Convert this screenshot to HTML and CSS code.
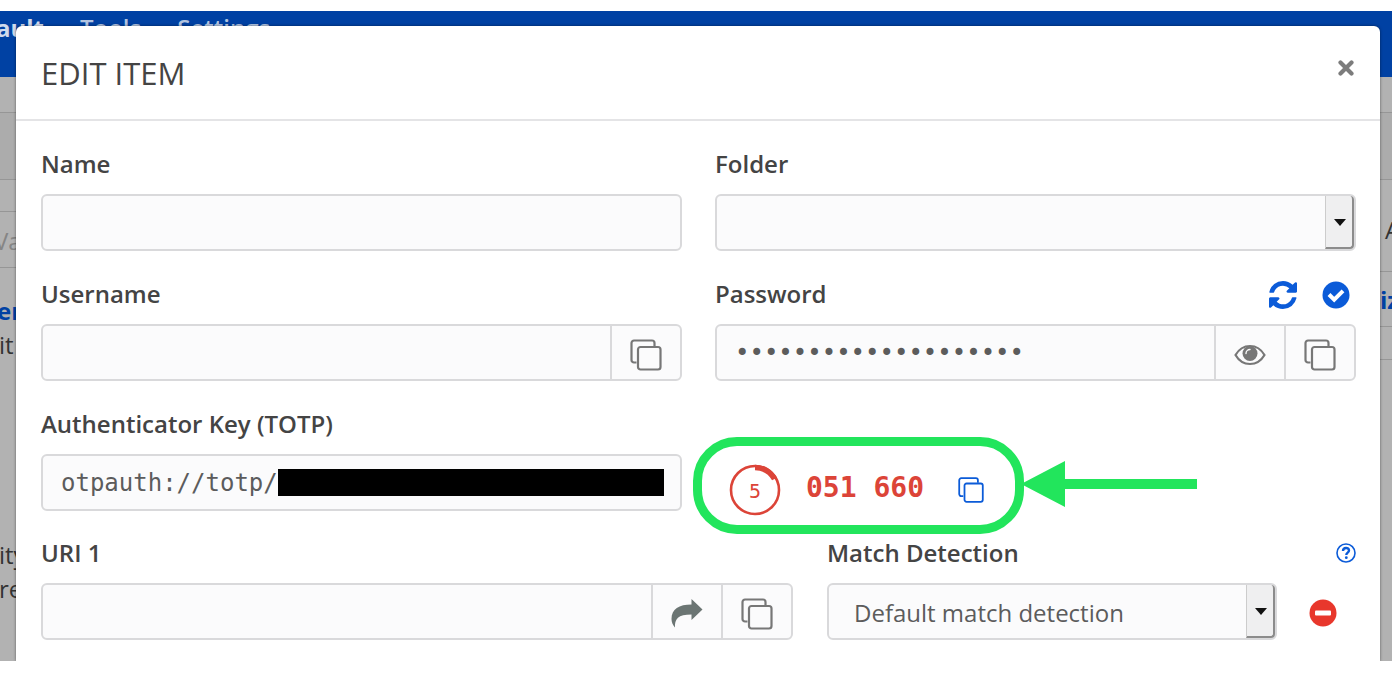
FILE: index.html
```html
<!DOCTYPE html>
<html lang="en">
<head>
<meta charset="utf-8">
<title>Edit item</title>
<link rel="stylesheet" href="styles.css">
</head>
<body>
<svg class="symbols" aria-hidden="true">
  <symbol id="copy" viewBox="0 0 32 32">
    <path d="M6.500 23.500H4a2.500 2.500 0 0 1-2.500-2.500V4A2.500 2.500 0 0 1 4 1.500h18A2.500 2.500 0 0 1 24.500 4v3" fill="none" stroke="currentColor" stroke-width="2.200"/>
    <rect x="8" y="8" width="22.500" height="22.500" rx="2.500" fill="none" stroke="currentColor" stroke-width="2.200"/>
  </symbol>
</svg>
<div class="stage">
  <div class="page" aria-hidden="true">
    <div class="nav"><span class="active">ault</span><span>Tools</span><span>Settings</span></div>
    <div class="strip"></div>
    <div class="band"></div>
    <div class="columns">
      <div class="side">
        <div class="search">Va</div>
        <div class="side-link">er</div>
        <div class="side-text">it</div>
        <div class="side-text later">ity</div>
        <div class="side-text">re</div>
      </div>
      <div class="side right">
        <div class="cell">A</div>
        <div class="cell link">iz</div>
        <div class="cell short"></div>
      </div>
    </div>
  </div>

  <form class="modal" role="dialog" aria-labelledby="title">
    <header class="modal-header">
      <h1 id="title">EDIT ITEM</h1>
      <button type="button" class="icon-button close" aria-label="Close">
        <svg viewBox="0 0 16 16" width="16" height="16"><path d="M2.500 2.500l11 11M13.500 2.500l-11 11" stroke="currentColor" stroke-width="4.200" stroke-linecap="round"/></svg>
      </button>
    </header>
    <div class="modal-body">
      <div class="row">
        <div class="field">
          <div class="label-row"><label for="name">Name</label></div>
          <div class="control"><input id="name" type="text"></div>
        </div>
        <div class="field">
          <div class="label-row"><label for="folder">Folder</label></div>
          <div class="control select"><select id="folder"><option></option></select></div>
        </div>
      </div>

      <div class="row">
        <div class="field">
          <div class="label-row"><label for="username">Username</label></div>
          <div class="control">
            <input id="username" type="text">
            <button type="button" class="addon" aria-label="Copy username"><svg class="copy"><use href="#copy"/></svg></button>
          </div>
        </div>
        <div class="field">
          <div class="label-row">
            <label for="password">Password</label>
            <div class="actions">
              <button type="button" class="icon-button" aria-label="Generate password">
                <svg viewBox="0 0 1536 1536" width="28" height="28"><path fill="currentColor" d="M1511 928q0 5-1 7-64 268-268 434.500t-478 166.500q-146 0-282.500-55t-243.500-157l-129 129q-19 19-45 19t-45-19-19-45v-448q0-26 19-45t45-19h448q26 0 45 19t19 45-19 45l-137 137q71 66 161 102t187 36q134 0 250-65t186-179q11-17 53-117 8-23 30-23h192q13 0 22.500 9.500t9.500 22.500zm25-800v448q0 26-19 45t-45 19h-448q-26 0-45-19t-19-45 19-45l138-138q-148-137-349-137-134 0-250 65t-186 179q-11 17-53 117-8 23-30 23h-199q-13 0-22.500-9.500t-9.500-22.500v-7q65-268 270-434.500t480-166.500q146 0 284 55.500t245 156.500l130-129q19-19 45-19t45 19 19 45z"/></svg>
              </button>
              <button type="button" class="icon-button" aria-label="Check password">
                <svg viewBox="0 0 28 28" width="28" height="28"><circle cx="14" cy="14" r="13.500" fill="currentColor"/><path d="M7 13.500l5.200 5.200 8.800-8.800" fill="none" stroke="#fff" stroke-width="4"/></svg>
              </button>
            </div>
          </div>
          <div class="control">
            <input id="password" class="mono" type="password" value="abcdefghijklmnopqrst">
            <button type="button" class="addon" aria-label="Show password">
              <svg viewBox="0 0 32 22" width="32" height="22"><path d="M1.500 11C5 5 10 2 16 2s11 3 14.500 9C27 17 22 20 16 20S5 17 1.500 11z" fill="none" stroke="currentColor" stroke-width="2.200"/><circle cx="16" cy="9.500" r="7.500" fill="currentColor"/><path d="M12 9.500a4 4 0 0 1 4-4" fill="none" stroke="#fafafa" stroke-width="1.400" stroke-linecap="round"/></svg>
            </button>
            <button type="button" class="addon" aria-label="Copy password"><svg class="copy"><use href="#copy"/></svg></button>
          </div>
        </div>
      </div>

      <div class="row">
        <div class="field">
          <div class="label-row"><label for="totp">Authenticator Key (TOTP)</label></div>
          <div class="control redacted"><input id="totp" class="mono" type="text" value="otpauth://totp/"></div>
        </div>
        <div class="totp">
          <svg class="timer" viewBox="0 0 52 52" width="52" height="52" role="img" aria-label="5 seconds left">
            <circle cx="26" cy="26" r="24" fill="none" stroke="currentColor" stroke-width="2.600"/>
            <path d="M26 3.500A22.500 22.500 0 0 1 45.500 15" fill="none" stroke="currentColor" stroke-width="5.500"/>
            <text x="26" y="34" text-anchor="middle" fill="currentColor">5</text>
          </svg>
          <output class="code">051 660</output>
          <button type="button" class="icon-button" aria-label="Copy code"><svg class="copy small"><use href="#copy"/></svg></button>
          <div class="highlight"></div>
          <svg class="arrow" viewBox="0 0 176 48" width="176" height="48" aria-hidden="true"><path d="M0 24L44 1v18h132v10H44v18z" fill="currentColor"/></svg>
        </div>
      </div>

      <div class="row uri">
        <div class="field">
          <div class="label-row"><label for="uri">URI 1</label></div>
          <div class="control">
            <input id="uri" type="text">
            <button type="button" class="addon launch" aria-label="Launch">
              <svg viewBox="0 0 32 30" width="32" height="30"><path d="M20.500 1v5.500C8 6.500 .5 11 .5 21c0 3 1.200 6 3.500 8.500C3.500 21 7 16.500 20.500 16.500V22L31.500 11.500z" fill="currentColor"/></svg>
            </button>
            <button type="button" class="addon" aria-label="Copy URI"><svg class="copy"><use href="#copy"/></svg></button>
          </div>
        </div>
        <div class="field">
          <div class="label-row">
            <label for="match">Match Detection</label>
            <a class="help" href="#match" aria-label="Help">
              <svg viewBox="0 0 20 20" width="20" height="20"><circle cx="10" cy="10" r="9" fill="none" stroke="currentColor" stroke-width="1.600"/><path d="M7 8c0-4 6-4 6-.5 0 2.200-2.700 2-2.700 4.500" fill="none" stroke="currentColor" stroke-width="2.400"/><circle cx="10.300" cy="14.700" r="1.400" fill="currentColor"/></svg>
            </a>
          </div>
          <div class="match">
            <div class="control select"><select id="match"><option>Default match detection</option></select></div>
            <button type="button" class="icon-button remove" aria-label="Remove URI">
              <svg viewBox="0 0 28 28" width="28" height="28"><circle cx="14" cy="14" r="13.500" fill="currentColor"/><rect x="6" y="11.500" width="16" height="5" rx="1" fill="#fff"/></svg>
            </button>
          </div>
        </div>
      </div>
    </div>
  </form>
</div>
</body>
</html>
```
FILE: styles.css
```css
*,
*::before,
*::after {
  box-sizing: border-box;
}

body {
  margin: 0;
  padding: 11px 8px 18px 0;
  background: #fff;
  color: #444;
  font-family: "Open Sans", sans-serif;
  font-size: 24px;
  line-height: 34px;
}

.symbols {
  position: absolute;
  width: 0;
  height: 0;
}

svg {
  display: block;
}

.stage {
  position: relative;
  overflow: hidden;
  padding: 15px 12px 0 16px;
}

/* Dimmed page behind the dialog */
.page {
  position: absolute;
  inset: 0;
  background: #b2b2b2;
  color: #333;
}

.nav {
  display: flex;
  gap: 36px;
  height: 66px;
  background: #0041a3;
  color: #b2c4e0;
  font-size: 24px;
  font-weight: 600;
}

.active {
  color: #d0daec;
  font-weight: 700;
  text-indent: -4px;
}

.strip {
  height: 35px;
}

.band {
  height: 68px;
  background: #acacac;
  border: solid #969696;
  border-width: 1px 0;
}

.columns {
  display: flex;
  justify-content: space-between;
}

.side {
  width: 16px;
  padding-top: 31px;
  white-space: nowrap;
}

.search {
  height: 57px;
  margin-bottom: 26px;
  border: solid #969696;
  border-width: 1px 0;
  line-height: 57px;
  text-indent: -6px;
  color: #858585;
}

.side-link {
  color: #0041a3;
  font-weight: 700;
  text-indent: -3px;
}

.side-text {
  text-indent: -1px;
}

.later {
  padding-top: 176px;
}

.side.right {
  width: 12px;
  padding: 0;
}

.cell {
  height: 92px;
  border-bottom: 1px solid #969696;
  line-height: 100px;
  text-indent: 5px;
}

.cell.link {
  height: 55px;
  line-height: 56px;
  color: #0041a3;
  font-weight: 700;
  text-indent: 0;
}

.cell.short {
  height: 33px;
}

/* Dialog */
.modal {
  position: relative;
  background: #fff;
  border-radius: 6px 6px 0 0;
  box-shadow: 0 0 3px rgba(0, 0, 0, 0.5);
}

.modal-header {
  display: flex;
  justify-content: space-between;
  align-items: flex-start;
  height: 95px;
  padding: 24px 26px 0 25px;
  border-bottom: 2px solid #e4e4e6;
}

h1 {
  margin: 0;
  font-size: 31px;
  font-weight: 400;
  line-height: 46px;
}

.icon-button {
  padding: 0;
  border: 0;
  background: none;
  color: #0b5bd8;
}

.close {
  padding-top: 10px;
  color: #7c7c7c;
}

.modal-body {
  display: flex;
  flex-direction: column;
  gap: 26px;
  padding: 26px 24px 21px 25px;
}

.row {
  display: grid;
  grid-template-columns: 1fr 1fr;
  gap: 33px;
}

.uri {
  grid-template-columns: 752fr 529fr;
  gap: 34px;
  margin-top: -6px;
}

.field {
  min-width: 0;
}

.label-row {
  display: flex;
  justify-content: space-between;
  align-items: center;
  margin-bottom: 13px;
}

label {
  font-weight: 600;
}

.actions {
  display: flex;
  gap: 25px;
  padding: 2px 6px 0 0;
}

.control {
  position: relative;
  display: flex;
  flex: 1;
  height: 57px;
  border: 2px solid #d9d9db;
  border-radius: 6px;
  background: #fbfbfc;
}

input,
select {
  flex: 1;
  min-width: 0;
  padding: 0 18px;
  border: 0;
  border-radius: 6px;
  outline: 0;
  background: none;
  color: #5c5c5c;
  font: inherit;
}

select {
  padding: 2px 40px 0 25px;
  appearance: none;
}

.mono {
  font-family: "DejaVu Sans Mono", monospace;
}

.addon {
  display: grid;
  place-items: center;
  width: 70px;
  padding: 4px 0 0;
  border: 0;
  border-left: 2px solid #d9d9db;
  background: none;
  color: #777;
}

.launch {
  padding-top: 2px;
  color: #6b7573;
}

.copy {
  width: 32px;
  height: 32px;
}

.copy.small {
  width: 26px;
  height: 26px;
}

.select::before {
  content: "";
  position: absolute;
  top: 0;
  right: 0;
  width: 29px;
  height: 53px;
  border: solid #8c8c8c;
  border-width: 0 2px 2px 0;
  border-left: 1px solid #ccc;
  border-radius: 0 4px 4px 0;
  background: #efeff0;
  pointer-events: none;
}

.select::after {
  content: "";
  position: absolute;
  top: 23px;
  right: 8px;
  border: solid transparent;
  border-width: 7px 6px 0;
  border-top-color: #111;
  pointer-events: none;
}

.redacted::after {
  content: "";
  position: absolute;
  top: 13px;
  right: 16px;
  left: 235px;
  height: 27px;
  background: #000;
}

.totp {
  position: relative;
  display: flex;
  align-items: center;
  padding: 57px 0 0 14px;
  color: #dc4438;
}

.timer {
  margin-right: 25px;
  font-family: "DejaVu Sans Mono", monospace;
  font-size: 20px;
}

.code {
  margin-right: 34px;
  font: 700 28px/44px "DejaVu Sans Mono", monospace;
  padding-bottom: 4px;
}

.highlight {
  position: absolute;
  top: 30px;
  left: -22px;
  width: 331px;
  height: 97px;
  border: 9px solid #22e55c;
  border-radius: 44px;
  pointer-events: none;
}

.arrow {
  position: absolute;
  top: 53px;
  left: 306px;
  color: #22e55c;
}

.help {
  color: #0b5bd8;
}

.match {
  display: flex;
  align-items: center;
}

.remove {
  display: grid;
  place-items: center;
  width: 79px;
  padding: 2px 0 0 12px;
  color: #e8372c;
}
```
